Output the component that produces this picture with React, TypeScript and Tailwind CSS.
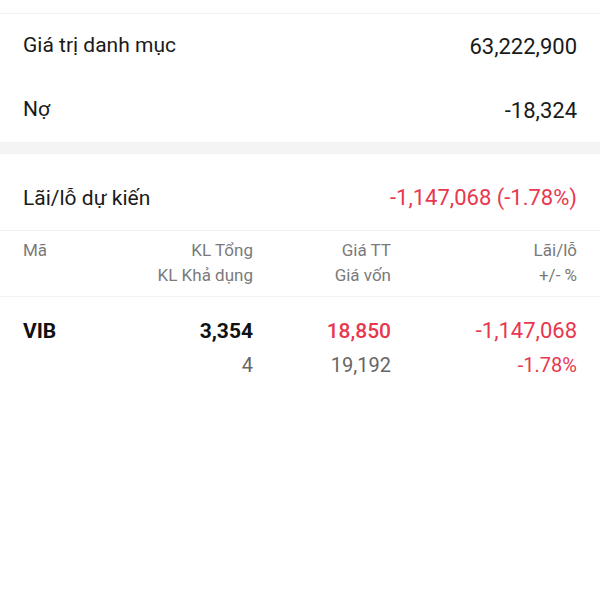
const RED = "text-[#e8374f]";

function SummaryRow({ label, value }: { label: string; value: string }) {
  return (
    <div className="flex h-16 items-center justify-between px-[23px] text-[#1a1a1a]">
      <span className="text-[21px]">{label}</span>
      <span className="text-[22px]">{value}</span>
    </div>
  );
}

export default function App() {
  return (
    <div className="min-h-[600px] w-[600px] bg-white font-['Roboto',sans-serif]">
      {/* top edge */}
      <div className="h-[14px] border-b border-[#f2f2f2]" />

      <SummaryRow label="Giá trị danh mục" value="63,222,900" />
      <SummaryRow label="Nợ" value="-18,324" />

      <div className="h-3 bg-[#f4f4f4]" />

      {/* Expected P/L */}
      <div className="flex items-center justify-between px-[23px] pt-8 pb-[20px] leading-6 text-[#1a1a1a]">
        <span className="text-[21px]">Lãi/lỗ dự kiến</span>
        <span className={`text-[22px] ${RED}`}>-1,147,068 (-1.78%)</span>
      </div>

      {/* Table header */}
      <div className="grid grid-cols-[100px_130px_138px_186px] border-y border-[#f2f2f2] px-[23px] pt-[7px] pb-[8px] text-[17px] leading-[25px] text-[#7a7a7a]">
        <div>Mã</div>
        <div className="text-right">
          <div>KL Tổng</div>
          <div>KL Khả dụng</div>
        </div>
        <div className="text-right">
          <div>Giá TT</div>
          <div>Giá vốn</div>
        </div>
        <div className="text-right">
          <div>Lãi/lỗ</div>
          <div>+/- %</div>
        </div>
      </div>

      {/* Holdings */}
      <div className="grid grid-cols-[100px_130px_138px_186px] px-[23px] pt-5 text-[21px] leading-7">
        <div className="font-bold text-[#111]">VIB</div>
        <div className="text-right">
          <div className="font-bold text-[#111]">3,354</div>
          <div className="mt-1.5 text-[20px] text-[#666]">4</div>
        </div>
        <div className="text-right">
          <div className={`font-medium ${RED}`}>18,850</div>
          <div className="mt-1.5 text-[20px] text-[#666]">19,192</div>
        </div>
        <div className="text-right">
          <div className={`text-[22px] ${RED}`}>-1,147,068</div>
          <div className={`mt-1.5 text-[20px] ${RED}`}>-1.78%</div>
        </div>
      </div>
    </div>
  );
}
